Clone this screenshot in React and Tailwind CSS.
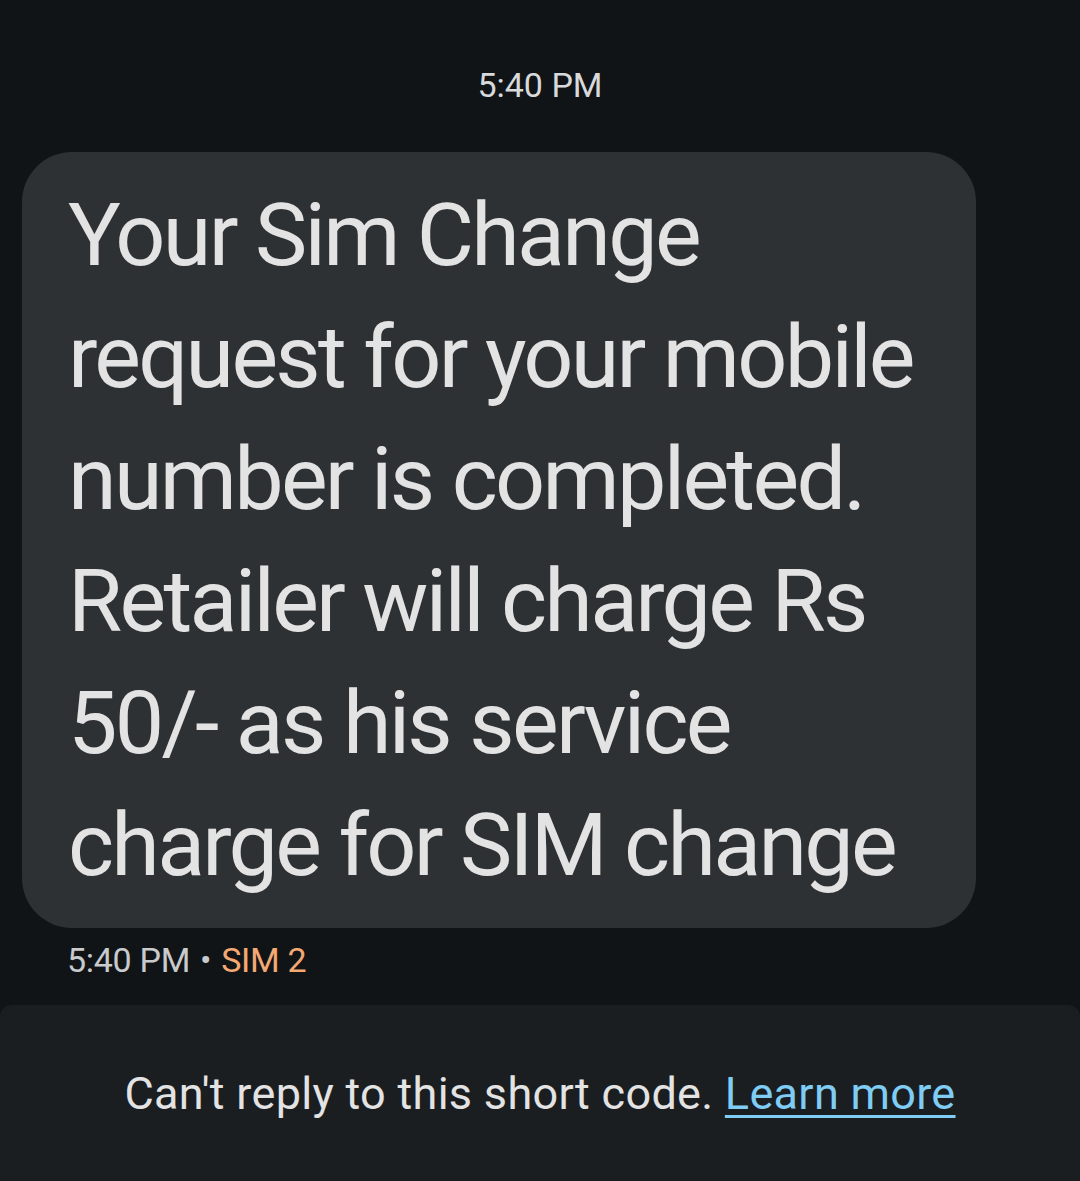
export default function App() {
    const lines = [
        'Your Sim Change',
        'request for your mobile',
        'number is completed.',
        'Retailer will charge Rs',
        '50/- as his service',
        'charge for SIM change',
    ];

    return (
        <div className="w-[1080px] h-[1181px] bg-[#111417] flex flex-col overflow-hidden font-['Roboto',sans-serif] text-[#e3e3e3]">
            {/* timestamp header */}
            <div className="h-[152px] flex justify-center pt-[63px]">
                <span className="text-[34px] leading-[44px] text-[#d7d9db]">5:40 PM</span>
            </div>

            {/* message bubble */}
            <div className="ml-[22px] w-[954px] rounded-[50px] bg-[#2e3134] pl-[46px] pr-[30px] py-[22px]">
                {lines.map((line, idx) => (
                    <p key={idx} className="text-[88px] leading-[122px] tracking-[-2.7px] whitespace-nowrap">
                        {line}
                    </p>
                ))}
            </div>

            {/* meta row */}
            <div className="pl-[67px] pt-[10px] flex items-center text-[34px] leading-[44px] tracking-[-0.3px]">
                <span className="text-[#c8cacc]">5:40 PM</span>
                <span className="text-[#c8cacc] mx-[10px]">•</span>
                <span className="text-[#f4a872]">SIM 2</span>
            </div>

            {/* bottom notice */}
            <div className="mt-[23px] flex-1 rounded-t-[12px] bg-[#1b1e21] flex justify-center pt-[61px]">
                <p className="text-[45px] leading-[56px] tracking-[0.3px] text-[#e3e3e3]">
                    Can't reply to this short code.{' '}
                    <span className="text-[#7fcdf5] underline decoration-[3px] underline-offset-[6px]">Learn more</span>
                </p>
            </div>
        </div>
    );
}
